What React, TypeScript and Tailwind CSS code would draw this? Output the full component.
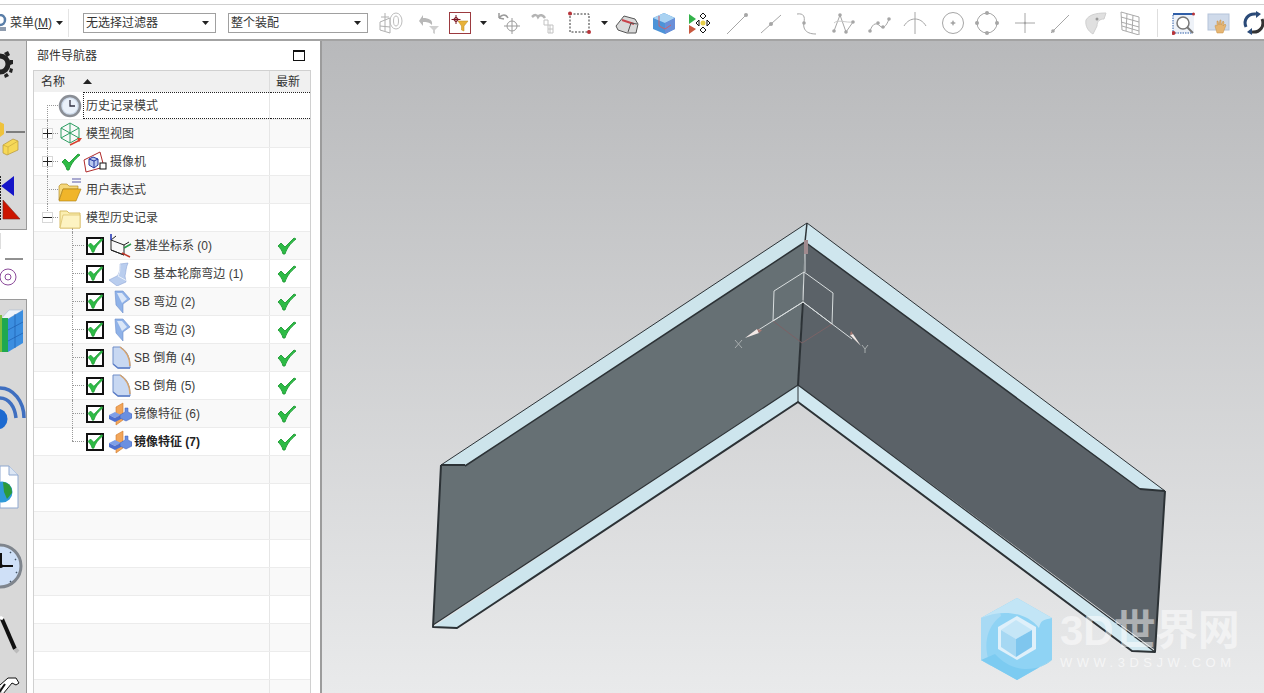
import type { ReactNode } from "react";

const Caret = () => (
  <svg width="7" height="4" viewBox="0 0 7 4" className="shrink-0">
    <path d="M0 0h7L3.5 4z" fill="#222" />
  </svg>
);

const I = ({ children, size = 24 }: { children: ReactNode; size?: number }) => (
  <svg width={size} height={size} viewBox="0 0 24 24" className="shrink-0" fill="none">
    {children}
  </svg>
);

const G = "#a6a6a6";

// toolbar icons, left to right, each a 24px cell with the gap from the picture
const toolbar: { ml: string; icon: ReactNode }[] = [
  { ml: "ml-[11px]", icon: <I><path d="M1 11l10-4v15l-10-3zM6 9v11M1 15l10 1M6 2v7M2 6h8" stroke="#b0b0b0" /><ellipse cx="17" cy="10" rx="6" ry="8" stroke="#bdbdbd" /><ellipse cx="17" cy="10" rx="2.500" ry="5" stroke="#bdbdbd" /></I> },
  { ml: "ml-[13px]", icon: <I><path d="M3 10l4-6v3c6 0 10 2 9 7-3-3-5-3-9-3v4z" fill="#b8b8b8" /><path d="M13 15h10l-4 4v4l-2-1v-3z" fill="#d0d0d0" /></I> },
  { ml: "ml-[8px]", icon: <svg width="22" height="22" viewBox="0 0 22 22" className="shrink-0" fill="none"><rect x=".5" y=".5" width="21" height="21" fill="#fff" stroke="#9c3a3f" /><path d="M7 3v9M2.500 7.500h9" stroke="#7a1420" /><circle cx="7" cy="7.500" r="2" stroke="#7a1420" /><path d="M9 9h10l-4 5v5l-2.500-1v-4z" fill="#e8b23a" stroke="#b98a1e" strokeWidth=".5" /></svg> },
  { ml: "-ml-px", icon: <Caret /> },
  { ml: "ml-[2px]", icon: <I><path d="M2 7c3-4 7-4 9 0M2 7V2M2 7l5 1" stroke="#9a9a9a" strokeWidth="1.500" /><circle cx="15" cy="15" r="5" stroke="#9a9a9a" /><path d="M15 7v16M7 15h16" stroke="#9a9a9a" /></I> },
  { ml: "ml-[10px]", icon: <I><path d="M1 6c3-3 5-2 6 0 2-3 5-2 7 1" stroke="#b4b4b4" strokeWidth="2.500" /><path d="M13 9h4v5h-4zM17 14h5v8h-5zM17 18h5M19 14v8" stroke="#c2c2c2" /></I> },
  { ml: "ml-[13px]", icon: <svg width="24" height="24" viewBox="0 0 24 24" className="shrink-0" fill="none"><rect x="2" y="3" width="19" height="18" stroke="#333" strokeDasharray="2 1.500" /><circle cx="2" cy="2.500" r="2" fill="#b8343a" /><circle cx="21" cy="21" r="2" fill="#b8343a" /></svg> },
  { ml: "ml-0", icon: <Caret /> },
  { ml: "-ml-px", icon: <I><path d="M1 15l8-10 11 3 3 5-2 9-9 0-9-3z" fill="#d9d9d9" stroke="#555" /><path d="M7 9l12 4" stroke="#c8424a" strokeWidth="2" /><path d="M13 21l3-9 6 1" stroke="#555" /></I> },
  { ml: "ml-[13px]", icon: <I><path d="M12 2l11 5v11l-10 5L1 18V7z" fill="#4c93d8" /><path d="M1 7l11-5 11 5-10 5z" fill="#a9d2f2" /><path d="M13 12v11l10-5V7z" fill="#6a8fd8" /><path d="M7 5v10l6 3 6-4" stroke="#c8626e" /></I> },
  { ml: "ml-[12px]", icon: <I><path d="M1 3l7 5-7 5z" fill="#33b24a" /><path d="M1 14l7 4-7 5z" fill="#c9593f" /><circle cx="15" cy="12" r="2.500" fill="#e8cf48" /><path d="M15 2l3 3-3 3-3-3zM15 16l3 3-3 3-3-3zM8 12l3-3v6zM22 12l-3-3v6z" fill="#fff" stroke="#111" strokeWidth="1" /></I> },
  { ml: "ml-[13px]", icon: <I><path d="M2 23L21 4" stroke={G} /><circle cx="21" cy="4" r="2" fill={G} /></I> },
  { ml: "ml-[10px]", icon: <I><path d="M2 22L22 4" stroke={G} /><circle cx="12" cy="13" r="2" fill={G} /></I> },
  { ml: "ml-[13px]", icon: <I><path d="M1 3c7-1 8 3 7 8s0 12 12 12" stroke={G} /><circle cx="8" cy="12" r="1.800" fill={G} /></I> },
  { ml: "ml-[12px]", icon: <I><path d="M2 20L8 4l6 17 7-10" stroke={G} /><path d="M2 12c4-4 12 0 19-1" stroke="#ccc" /><circle cx="2" cy="20" r="1.800" fill={G} /><circle cx="8" cy="4" r="1.800" fill={G} /><circle cx="14" cy="21" r="1.800" fill={G} /><circle cx="21" cy="11" r="1.800" fill={G} /></I> },
  { ml: "ml-[12px]", icon: <I><path d="M2 20c3-9 7-8 10-5s6 1 9-7" stroke={G} /><circle cx="2" cy="20" r="1.800" fill={G} /><circle cx="10" cy="12" r="1.800" fill={G} /><circle cx="15" cy="16" r="1.800" fill={G} /><circle cx="21" cy="8" r="1.800" fill={G} /></I> },
  { ml: "ml-[11px]", icon: <I><path d="M12 1v22M1 15c3-5 7-7 11-7s8 2 11 7" stroke={G} /></I> },
  { ml: "ml-[14px]", icon: <I><circle cx="12" cy="12" r="10.500" stroke={G} /><path d="M12 9l1 2 2 1-2 1-1 2-1-2-2-1 2-1z" fill={G} /></I> },
  { ml: "ml-[10px]", icon: <I><circle cx="12" cy="12" r="10" stroke={G} /><circle cx="12" cy="2" r="2" fill={G} /><circle cx="12" cy="22" r="2" fill={G} /><circle cx="2" cy="12" r="2" fill={G} /><circle cx="22" cy="12" r="2" fill={G} /></I> },
  { ml: "ml-[14px]", icon: <I><path d="M12 2v20M2 12h20" stroke={G} /><circle cx="12" cy="12" r="1.200" fill={G} /></I> },
  { ml: "ml-[11px]", icon: <I><path d="M3 22L21 4" stroke={G} /><circle cx="5" cy="20" r="1.800" fill={G} /></I> },
  { ml: "ml-[12px]", icon: <I><path d="M2 9c3-5 9-7 20-7l-2 6c-4 0-7 2-7 7l-4 8c-5-3-8-8-7-14z" fill="#e0e0e0" stroke="#d0d0d0" /><circle cx="13" cy="8" r="1.500" fill="#999" /></I> },
  { ml: "ml-[10px]", icon: <I><path d="M3 1l18 5v18L4 19zM9 3l-1 17M15 4l-1 18M3 6l18 5M3 11l18 5M4 15l17 5" stroke="#aaa" /></I> },
  { ml: "ml-[3px]", icon: <span className="h-[28px] w-px bg-[#dedede]" /> },
  { ml: "ml-[3px]", icon: <I><rect x="1" y="2" width="21" height="20" fill="#eef2f8" /><path d="M1 2h21v2H1z" fill="#2f5ea8" /><path d="M1 4v18h19" stroke="#2f5ea8" strokeDasharray="1.500 1" /><circle cx="11" cy="12" r="6" fill="#fff" stroke="#777" strokeWidth="1.500" /><path d="M15 16l6 6" stroke="#777" strokeWidth="2" /><circle cx="1.500" cy="22" r="2" fill="#b8343a" /><circle cx="21.500" cy="3" r="1.500" fill="#b8343a" /></I> },
  { ml: "ml-[11px]", icon: <I><rect x="1" y="3" width="21" height="16" fill="#cfdaea" stroke="#b5c4da" /><path d="M10 22l-2-7c0-1 1-1 2 0l0-5h1l1 4 1-5h1l0 5 2-4 1 1-1 4 2-2 1 1-3 8z" fill="#e6b673" stroke="#c58f45" strokeWidth=".5" /></I> },
  { ml: "ml-[11px]", icon: <I><path d="M4 16C1 9 6 2 14 3" stroke="#2a4a78" strokeWidth="3" /><path d="M20 8c3 7-2 14-10 13" stroke="#333" strokeWidth="3" /><path d="M14 0l5 3-5 4zM10 17l-5 4 5 3z" fill="#2a4a78" /></I> },
];

const TreeCheck = ({ small }: { small?: boolean }) => (
  <svg width={small ? 17 : 20} height={small ? 15 : 18} viewBox="0 0 20 18" className="shrink-0">
    <path d="M1 9l3-3 4 4 9-9 2 1C13 7 10 11 8 17h-2C5 13 3 11 1 9z" fill="#2dbb45" stroke="#1f9a35" strokeWidth=".9" />
  </svg>
);

const Box = () => (
  <span className="flex h-[18px] w-[18px] shrink-0 items-center justify-center border-2 border-[#111] bg-white">
    <TreeCheck small />
  </span>
);

const Clock = () => (
  <I><circle cx="12" cy="12" r="10" fill="#cfdcec" stroke="#8b8f96" strokeWidth="2.500" /><circle cx="12" cy="12" r="7.500" fill="#eaf1fa" /><path d="M12 6v6h5" stroke="#334" strokeWidth="1.300" /></I>
);
const ModelView = () => (
  <I><path d="M12 1l9 5v10l-9 5-9-5V6zM3 6l9 5 9-5M12 11v10M3 16l9-5 9 5M12 1v10" stroke="#2e9e63" /><path d="M12 23l10-5" stroke="#d8412f" strokeWidth="1.500" /><path d="M24 16l-5 0 2 4z" fill="#d8412f" /></I>
);
const Camera = () => (
  <I><path d="M1 10l16-8 4 15L3 22z" fill="#fff" stroke="#b02a2a" /><path d="M10 7l5 2v6l-4 3-5-3V9z" fill="#b8c8ef" stroke="#2334a0" /><path d="M6 9l5 2 4-2M11 11v7" stroke="#2334a0" /><rect x="17" y="13" width="6" height="6" fill="#fff" stroke="#111" /></I>
);
const FolderOpen = () => (
  <I><path d="M1 22V8l2-2h6l2 2h9v3H5z" fill="#f5d77a" stroke="#a87c12" strokeWidth=".6" /><path d="M1 23l4-12h18l-5 12z" fill="#f0b52a" stroke="#a87c12" strokeWidth=".6" /><path d="M14 1h9M14 4h9" stroke="#5b5ba8" strokeWidth="1.200" /></I>
);
const Folder = () => (
  <I><path d="M2 22V5h7l2 2h11v15z" fill="#fbeeb0" stroke="#d8bd66" /><path d="M2 22l3-13h17v13z" fill="#fdf3c2" stroke="#d8bd66" strokeWidth=".7" /></I>
);
const Datum = () => (
  <I><path d="M3 6l13 5v10L3 16zM3 6l5-4M16 11l5-3" stroke="#222" /><path d="M3 16l13 5" stroke="#222" /><path d="M3 6V0" stroke="#1b2fb0" strokeWidth="1.500" /><path d="M16 14l7-4" stroke="#2a9a4a" strokeWidth="1.500" /><path d="M14 19l8 4" stroke="#c0392b" strokeWidth="1.500" /></I>
);
const Contour = () => (
  <I><path d="M1 18l8-4c3-3 3-8 3-12l8-1c-2 4-2 9-3 13l1 6-9 4z" fill="#b9cdee" stroke="#8fa6d6" strokeWidth=".6" /><path d="M12 2c0 5 0 9-2 12l9 5" stroke="#eaf0fa" /></I>
);
const Flange = () => (
  <I><path d="M7 1h8l7 8-7 5v9l-7-8z" fill="#8fb2e8" stroke="#6d8fcb" strokeWidth=".6" /><path d="M9 3h5l5 6-5 4" fill="#dbe7f8" /></I>
);
const Chamfer = () => (
  <I><path d="M5 1h7c6 3 10 9 10 19v2H10L5 18z" fill="#c8d8f2" stroke="#6f8dc8" /><path d="M22 20c0-9-4-15-10-19" stroke="#d8a36a" strokeWidth="1.500" /><path d="M5 18l5 4h12" stroke="#5f80c8" strokeWidth="1.500" /></I>
);
const Mirror = () => (
  <I><path d="M8 5l7-4v17l-7 5z" fill="#f2a65a" stroke="#d07a2c" strokeWidth=".6" /><path d="M1 13l6-3 6 3-6 3z" fill="#7f9fe8" /><path d="M1 13v4l6 3v-4zM13 13v4l-6 3v-4z" fill="#4d6fd0" /><path d="M12 13l5-3v-4h3v4l4 2v4l-6 3-6-3z" fill="#6a8fe0" stroke="#3a5ab8" strokeWidth=".5" /></I>
);

type Row = { text: string; pl: string; tl: string; icons: ReactNode; exp?: "+" | "-"; ok?: boolean; bold?: boolean; focus?: boolean; branch: "a" | "a-end" | "a-start" | "b" | "b-end" };

const rows: Row[] = [
  { text: "历史记录模式", pl: "pl-[24px]", tl: "ml-[4px]", icons: <Clock />, branch: "a-start", focus: true },
  { text: "模型视图", pl: "pl-[24px]", tl: "ml-[4px]", icons: <ModelView />, exp: "+", branch: "a" },
  { text: "摄像机", pl: "pl-[27px]", tl: "ml-[3px]", icons: <><TreeCheck /><span className="w-[2px]" /><Camera /></>, exp: "+", branch: "a" },
  { text: "用户表达式", pl: "pl-[24px]", tl: "ml-[4px]", icons: <FolderOpen />, branch: "a" },
  { text: "模型历史记录", pl: "pl-[24px]", tl: "ml-[4px]", icons: <Folder />, exp: "-", branch: "a-end" },
  { text: "基准坐标系 (0)", pl: "pl-[52px]", tl: "ml-[2px]", icons: <><Box /><span className="w-1" /><Datum /></>, ok: true, branch: "b" },
  { text: "SB 基本轮廓弯边 (1)", pl: "pl-[52px]", tl: "ml-[2px]", icons: <><Box /><span className="w-1" /><Contour /></>, ok: true, branch: "b" },
  { text: "SB 弯边 (2)", pl: "pl-[52px]", tl: "ml-[2px]", icons: <><Box /><span className="w-1" /><Flange /></>, ok: true, branch: "b" },
  { text: "SB 弯边 (3)", pl: "pl-[52px]", tl: "ml-[2px]", icons: <><Box /><span className="w-1" /><Flange /></>, ok: true, branch: "b" },
  { text: "SB 倒角 (4)", pl: "pl-[52px]", tl: "ml-[2px]", icons: <><Box /><span className="w-1" /><Chamfer /></>, ok: true, branch: "b" },
  { text: "SB 倒角 (5)", pl: "pl-[52px]", tl: "ml-[2px]", icons: <><Box /><span className="w-1" /><Chamfer /></>, ok: true, branch: "b" },
  { text: "镜像特征 (6)", pl: "pl-[52px]", tl: "ml-[2px]", icons: <><Box /><span className="w-1" /><Mirror /></>, ok: true, branch: "b" },
  { text: "镜像特征 (7)", pl: "pl-[52px]", tl: "ml-[2px]", icons: <><Box /><span className="w-1" /><Mirror /></>, ok: true, bold: true, branch: "b-end" },
];

function Branch({ kind }: { kind: Row["branch"] }) {
  const line = "absolute border-l border-dotted border-[#999]";
  const across = "absolute top-[13px] h-px border-t border-dotted border-[#999]";
  if (kind === "a") return <><span className={`${line} left-[13px] top-0 h-[28px]`} /><span className={`${across} left-[13px] w-[11px]`} /></>;
  if (kind === "a-start") return <><span className={`${line} left-[13px] top-[13px] h-[15px]`} /><span className={`${across} left-[13px] w-[11px]`} /></>;
  if (kind === "a-end") return <><span className={`${line} left-[13px] top-0 h-[13px]`} /><span className={`${across} left-[13px] w-[11px]`} /><span className={`${line} left-[38px] top-[24px] h-[4px]`} /></>;
  if (kind === "b") return <><span className={`${line} left-[38px] top-0 h-[28px]`} /><span className={`${across} left-[38px] w-[12px]`} /></>;
  return <><span className={`${line} left-[38px] top-0 h-[13px]`} /><span className={`${across} left-[38px] w-[12px]`} /></>;
}

function TreeRow({ row, odd }: { row: Row; odd: boolean }) {
  return (
    <div className={`flex h-[28px] shrink-0 border-b border-[#ececec] ${odd ? "bg-[#f9f9f9]" : "bg-white"}`}>
      <div className={`relative flex w-[235px] shrink-0 items-center ${row.pl}`}>
        <Branch kind={row.branch} />
        {row.exp && (
          <span className="absolute left-[8px] top-[8px] flex h-[11px] w-[11px] items-center justify-center border border-[#d8d8d8] bg-white text-[#222]">
            <span className="absolute h-px w-[9px] bg-[#222]" />
            {row.exp === "+" && <span className="absolute h-[9px] w-px bg-[#222]" />}
          </span>
        )}
        <span className="relative flex items-center">{row.icons}</span>
        <span className={`relative whitespace-pre text-[12px] text-[#3c3c3c] ${row.tl} ${row.bold ? "font-bold text-[#222]" : ""}`}>{row.text}</span>
        {row.focus && <span className="absolute bottom-0 left-[49px] right-0 top-0 border-y border-l border-dotted border-[#222]" />}
      </div>
      <div className="relative flex flex-1 items-center justify-center border-l border-[#e6e6e6] pr-[6px]">
        {row.ok && <TreeCheck />}
        {row.focus && <span className="absolute inset-x-0 inset-y-0 border-y border-dotted border-[#222]" />}
      </div>
    </div>
  );
}

const TopStripIcons = () => (
  <svg width="26" height="188" viewBox="0 41 26 188" className="block">
    <circle cx="0" cy="64" r="8" fill="none" stroke="#222" strokeWidth="5" />
    <path d="M4 53l4-2 2 4-3 2zM10 60l3 0 0 4-3 1zM10 68l3 1-1 4-3-1zM4 75l3-2 2 3-4 2z" fill="#222" />
    <path d="M0 122l4 2v10l-4 3z" fill="#eec23c" />
    <path d="M6 132h19" stroke="#222" />
    <path d="M3 145l10-6 5 2v9l-11 5-4-2z" fill="#f6d857" stroke="#b5953a" strokeWidth=".7" />
    <path d="M3 145l5 2 10-6M8 147v8" stroke="#c9a93f" strokeWidth=".7" fill="none" />
    <path d="M14 176v20L1 186z" fill="#1515c8" />
    <path d="M3 200l17 19H3z" fill="#cc1500" stroke="#7b2a20" strokeWidth=".6" />
    <path d="M.5 176v44" stroke="#222" strokeDasharray="2 1" />
  </svg>
);

const MidStripIcons = () => (
  <svg width="27" height="68" viewBox="0 230 27 68" className="block">
    <rect x="-1" y="233" width="2" height="16" fill="#ddd" />
    <path d="M5 259h18" stroke="#222" />
    <circle cx="8" cy="277" r="8" fill="none" stroke="#8b4a9a" />
    <circle cx="8" cy="277" r="3" fill="none" stroke="#8b4a9a" />
  </svg>
);

const BottomStripIcons = () => (
  <svg width="26" height="394" viewBox="0 299 26 394" className="block">
    <path d="M0 319l9-10 14 0-15 9-4 1z" fill="#eef3fa" stroke="#9fb2cc" strokeWidth=".5" />
    <path d="M0 314h2v37H0z" fill="#7fbf3c" />
    <path d="M2 317h6v34H2z" fill="#1fa850" />
    <path d="M8 318l15-9v33l-15 9z" fill="#3b8ee0" />
    <path d="M8 329l15-8M8 340l15-8M15 313v34" stroke="#1e5fb0" strokeWidth=".7" />
    <path d="M0 397c9 0 15 9 16 20" fill="none" stroke="#3f6fc0" strokeWidth="3.500" />
    <path d="M0 387c13 0 24 13 24 30" fill="none" stroke="#3f6fc0" strokeWidth="3.500" />
    <circle cx="-3" cy="418" r="10.500" fill="#1c6ad0" />
    <path d="M0 465h9l9 9v33H0z" fill="#fff" stroke="#8fa8cf" />
    <path d="M9 465v9h9" fill="#dce6f4" stroke="#8fa8cf" />
    <circle cx="2" cy="491" r="10.500" fill="#2f9ad8" />
    <path d="M3 481c7 1 9 6 9 11l-5 6-3-7z" fill="#2c9a3a" />
    <circle cx="0" cy="565" r="21" fill="#cfe0f7" stroke="#7f858d" strokeWidth="3" />
    <path d="M1 552v13h12" fill="none" stroke="#111" strokeWidth="2" />
    <circle cx="1" cy="565" r="2" fill="#111" />
    <path d="M15 558l1 1M16 571l1 1M10 580l1 1M10 551l1 1" stroke="#456" strokeWidth="1.500" />
    <path d="M2 618l13 30" stroke="#111" strokeWidth="4" />
    <path d="M15 648l3 3" stroke="#bbb" strokeWidth="4" />
    <path d="M0 616l3 2" stroke="#fff" strokeWidth="3" />
    <path d="M0 684l8-7 8 0 3 5-3 2-4-2-9 11" fill="#fff" stroke="#111" />
    <path d="M-2 693l7-10" stroke="#111" strokeWidth="2" />
  </svg>
);

const Model = () => (
  <svg viewBox="322 41 942 652" className="block h-full w-full">
    {/* top flanges */}
    <path d="M441 465L807 223 805 242 465 466z" fill="#cde4eb" />
    <path d="M807 223L1165 491 1140 489 805 242z" fill="#cfe6ee" />
    {/* bottom flanges */}
    <path d="M798 385L798 402 457 628 433 627z" fill="#cde5ed" />
    <path d="M798 385L798 402 1132 651 1155 652z" fill="#d1e8f0" />
    {/* webs */}
    <path d="M441 465L465 466 805 242 798 385 433 625z" fill="#667074" />
    <path d="M805 242L1140 489 1165 491 1155 650 798 385z" fill="#5b6268" />
    {/* edges */}
    <g fill="none" stroke="#2c3236" strokeLinejoin="round">
      <path d="M441 465L807 223 1165 491" strokeWidth="1" />
      <path d="M465 466L805 242 1140 489" strokeWidth="1.500" />
      <path d="M441 465H465M1140 489L1165 491" strokeWidth="2" />
      <path d="M441 465L433 627 457 628 798 402 1132 651 1155 652 1165 491" strokeWidth="2" />
      <path d="M433 625L798 385 1155 652" strokeWidth="1.200" />
      <path d="M798 385V402" strokeWidth="1" />
      <path d="M807 223L805 242" strokeWidth="1.500" />
      <path d="M803 300L798 385" strokeWidth="2" />
    </g>
    {/* datum csys */}
    <path d="M773 321L802 343 832 324" stroke="#7b6266" fill="none" />
    <g stroke="#d9dedf" fill="none">
      <path d="M803 302L804 272M805 245V272" />
      <path d="M804 272L774 291 773 321 803 302 832 324 833 293 804 272" />
      <path d="M803 302L752 334M803 302L852 339" />
    </g>
    <path d="M745 338l12-9 2 4z" fill="#f3e9e6" />
    <path d="M757 329l2 4 3-3z" fill="#a97a74" />
    <path d="M861 346l-11-11 3-1z" fill="#f3e9e6" />
    <path d="M850 335l3-1-2-3z" fill="#a97a74" />
    <path d="M806 240v14" stroke="#a08a8e" strokeWidth="4" />
    <path d="M735 340l7 8M742 340l-7 8M862 345l3 4 3-4M865 349v4" stroke="#a8adae" fill="none" />
  </svg>
);

const Logo = () => (
  <svg width="72" height="82" viewBox="0 0 72 82" className="block shrink-0">
    <path d="M36 0L71 20 71 62 36 82 0 62 0 20z" fill="#8fd3f4" />
    <path d="M0 20V62L10 68C2 50 4 30 20 18L18 10z" fill="#a8daf4" />
    <path d="M36 0L0 20C18 12 44 12 58 30 60 22 62 22 71 20z" fill="#c2e5f6" />
    <path d="M0 62L36 82 71 62C60 72 34 78 14 56z" fill="#7ccbf1" />
    <path d="M36 18L55 29V51L36 62 17 51V29z" fill="#dff0fa" />
    <path d="M35 22L51 32 35 41 20 32z" fill="#c5e6f7" />
    <path d="M20 32L35 41V59L20 49z" fill="#a6d8f3" />
    <path d="M51 32L35 41V59L51 49z" fill="#7fc6ee" />
  </svg>
);

export default function App() {
  return (
    <div className="flex h-[693px] w-[1264px] flex-col overflow-hidden bg-white font-['Liberation_Sans','Noto_Sans_CJK_SC',sans-serif]">
      {/* toolbar */}
      <div className="h-[5px] shrink-0 border-b border-[#cfcfcf] bg-white" />
      <div className="flex h-[36px] shrink-0 items-center border-b-2 border-[#a3a3a3] bg-white pt-[1px]">
        <svg width="10" height="18" viewBox="0 0 10 18" className="shrink-0">
          <circle cx="0" cy="6" r="5" fill="none" stroke="#5a7ea8" strokeWidth="2.500" />
          <path d="M0 13h6v4H0z" fill="#8f9cae" />
        </svg>
        <span className="w-[46px] shrink-0 whitespace-pre text-[12px] text-[#333]">菜单(<span className="underline">M</span>)</span>
        <Caret />
        <span className="ml-[5px] h-[28px] w-px shrink-0 bg-[#e4e4e4]" />
        <div className="ml-[14px] flex h-[20px] w-[133px] shrink-0 items-center justify-between border border-[#a0a0a0] pl-[2px] pr-[6px] text-[12px] text-[#333]">
          <span>无选择过滤器</span>
          <Caret />
        </div>
        <div className="ml-[12px] flex h-[20px] w-[140px] shrink-0 items-center justify-between border border-[#a0a0a0] pl-[2px] pr-[6px] text-[12px] text-[#333]">
          <span>整个装配</span>
          <Caret />
        </div>
        <div className="flex shrink-0 items-center">
          {toolbar.map((t, i) => (
            <span key={i} className={`flex w-[24px] shrink-0 items-center justify-center ${t.ml}`}>{t.icon}</span>
          ))}
        </div>
      </div>

      <div className="flex min-h-0 flex-1">
        {/* left resource bar */}
        <div className="flex w-[27px] shrink-0 flex-col overflow-hidden bg-white">
          <div className="h-[189px] shrink-0 border-b border-r border-[#9a9a9a] bg-[#d8d8d8]"><TopStripIcons /></div>
          <div className="h-[69px] shrink-0"><MidStripIcons /></div>
          <div className="flex-1 border-r border-t border-[#9a9a9a] bg-[#d8d8d8]"><BottomStripIcons /></div>
        </div>

        {/* part navigator */}
        <div className="flex w-[295px] shrink-0 flex-col border-r-2 border-[#9c9c9c] bg-white pl-[6px] pr-[9px]">
          <div className="flex h-[29px] shrink-0 items-center justify-between pl-[4px] pr-[6px] text-[12px] text-[#333]">
            <span>部件导航器</span>
            <span className="h-[11px] w-[12px] border border-t-2 border-[#111]" />
          </div>
          <div className="flex min-h-0 flex-1 flex-col overflow-hidden border-x border-t border-[#d0d0d0]">
            <div className="flex h-[21px] shrink-0 bg-[#f0f0f0] text-[12px] text-[#333]">
              <div className="flex w-[235px] shrink-0 items-center pl-[7px]">
                <span>名称</span>
                <svg width="9" height="5" viewBox="0 0 9 5" className="ml-[18px]"><path d="M0 5h9L4.500 0z" fill="#222" /></svg>
              </div>
              <div className="flex flex-1 items-center border-l border-[#dcdcdc] pl-[6px]">最新</div>
            </div>
            {rows.map((r, i) => <TreeRow key={i} row={r} odd={i % 2 === 1} />)}
            {[13, 14, 15, 16, 17, 18, 19, 20, 21].map((i) => (
              <div key={i} className={`flex h-[28px] shrink-0 border-b border-[#ececec] ${i % 2 === 1 ? "bg-[#f9f9f9]" : "bg-white"}`}>
                <div className="w-[235px] shrink-0" />
                <div className="flex-1 border-l border-[#e6e6e6]" />
              </div>
            ))}
          </div>
        </div>

        {/* graphics window */}
        <div className="relative min-w-0 flex-1 bg-[linear-gradient(180deg,#b8b9bb_0%,#e9eaeb_100%)]">
          <Model />
          <div className="absolute left-[659px] top-[557px] flex items-start gap-[7px]">
            <Logo />
            <div className="flex flex-col items-start pt-[10px]">
              <span className="text-[42px] font-bold leading-[46px] text-white/50">3D世界网</span>
              <span className="mt-[2px] text-[13px] leading-[14px] tracking-[4.5px] text-white/60">WWW.3DSJW.COM</span>
            </div>
          </div>
        </div>
      </div>
    </div>
  );
}
